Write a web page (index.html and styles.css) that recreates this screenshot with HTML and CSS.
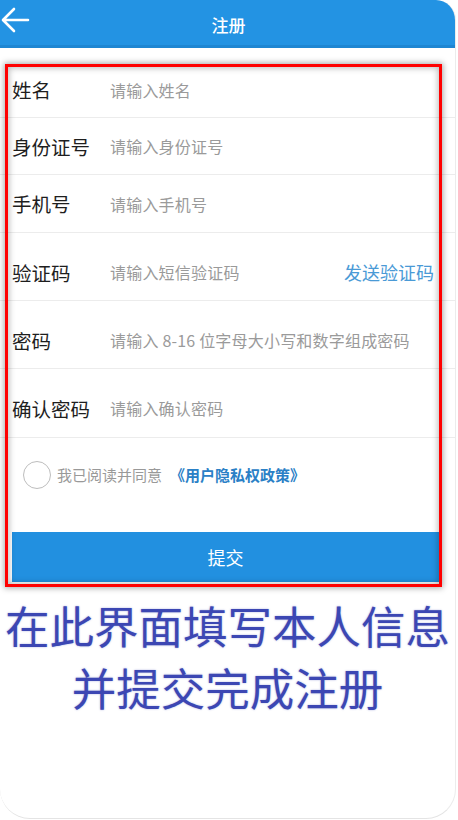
FILE: index.html
```html
<!DOCTYPE html>
<html lang="zh">
<head>
<meta charset="utf-8">
<title>注册</title>
<link rel="stylesheet" href="styles.css">
</head>
<body>
<div class="screen">
  <header class="header">
    <svg class="back" width="30" height="40" viewBox="0 0 30 40"><path d="M28 20 H4 M14 9 L3 20 L14 31" fill="none" stroke="#fff" stroke-width="2.6" stroke-linecap="round" stroke-linejoin="round"/></svg>
    <h1 class="title">注册</h1>
  </header>

  <section class="form">
    <div class="row r1"><span class="label">姓名</span><span class="ph">请输入姓名</span></div>
    <div class="row r2"><span class="label">身份证号</span><span class="ph">请输入身份证号</span></div>
    <div class="row r3"><span class="label">手机号</span><span class="ph">请输入手机号</span></div>
    <div class="row r4"><span class="label">验证码</span><span class="ph">请输入短信验证码</span><span class="send">发送验证码</span></div>
    <div class="row r5"><span class="label">密码</span><span class="ph">请输入 8-16 位字母大小写和数字组成密码</span></div>
    <div class="row r6"><span class="label">确认密码</span><span class="ph">请输入确认密码</span></div>
    <div class="agree"><span class="circle"></span><span class="agree-text">我已阅读并同意</span><span class="policy">《用户隐私权政策》</span></div>
    <div class="submit">提交</div>
    <div class="frame"></div>
  </section>

  <p class="caption">在此界面填写本人信息<br>并提交完成注册</p>
</div>
</body>
</html>
```
FILE: styles.css
```css
html, body {
  margin: 0;
  padding: 0;
  background: #fff;
}
body {
  font-family: "Noto Sans CJK SC", "Noto Sans", sans-serif;
}
.screen {
  width: 455px;
  height: 818px;
  position: relative;
  overflow: hidden;
  border-radius: 0 20px 30px 30px;
  border-right: 1px solid #ececec;
  border-bottom: 1px solid #e4e4e4;
  background: #fff;
}
.header {
  height: 48px;
  background: #2393e3;
  box-shadow: inset 0 -3px 0 #1e86d2;
  display: flex;
  align-items: center;
  justify-content: center;
  position: relative;
}
.back {
  position: absolute;
  left: 0;
  top: 0;
}
.title {
  margin: 0;
  color: #fff;
  font-size: 17px;
  font-weight: 500;
  margin-left: 2px;
}
.form {
  position: relative;
  margin-top: 19px;
}
.row {
  display: flex;
  align-items: center;
  padding-left: 12px;
  border-bottom: 1px solid #ececec;
  box-sizing: border-box;
}
.r1 { height: 51px; padding-bottom: 5px; }
.r2 { height: 57px; }
.r3 { height: 58px; }
.r4 { height: 68px; padding-top: 11px; }
.r5 { height: 68px; padding-top: 11px; }
.r6 { height: 69px; padding-top: 10px; }
.label {
  width: 98px;
  flex: none;
  font-size: 19.5px;
  color: #1e1e1e;
}
.ph {
  font-size: 16px;
  letter-spacing: 0.2px;
  color: #9a9a9a;
  flex: 1;
}
.send {
  font-size: 18px;
  color: #4a9ad6;
  margin-right: 21px;
}
.agree {
  display: flex;
  align-items: center;
  padding-left: 23px;
  margin-top: 22px;
  height: 29px;
}
.circle {
  width: 26px;
  height: 26px;
  border: 1.5px solid #bdbdbd;
  border-radius: 50%;
  flex: none;
}
.agree-text {
  margin-left: 6px;
  font-size: 15px;
  color: #999;
}
.policy {
  margin-left: 8px;
  font-size: 15px;
  font-weight: 700;
  color: #2a80c6;
}
.submit {
  margin-top: 43px;
  margin-left: 12px;
  width: 427px;
  height: 50px;
  background: #2290e0;
  color: #fff;
  font-size: 18px;
  display: flex;
  align-items: center;
  justify-content: center;
}
.frame {
  position: absolute;
  left: 5px;
  top: -3px;
  width: 437px;
  height: 523px;
  box-sizing: border-box;
  border: 3px solid #ff0000;
  box-shadow: 0 0 6px 1px rgba(0, 0, 0, 0.35), inset 0 0 6px 1px rgba(0, 0, 0, 0.28);
  pointer-events: none;
}
.caption {
  margin: 12px 0 0;
  text-align: center;
  font-size: 44.5px;
  line-height: 62px;
  color: #3c47b3;
  text-shadow: 0 0 2px rgba(60, 71, 179, 0.45);
}
```
